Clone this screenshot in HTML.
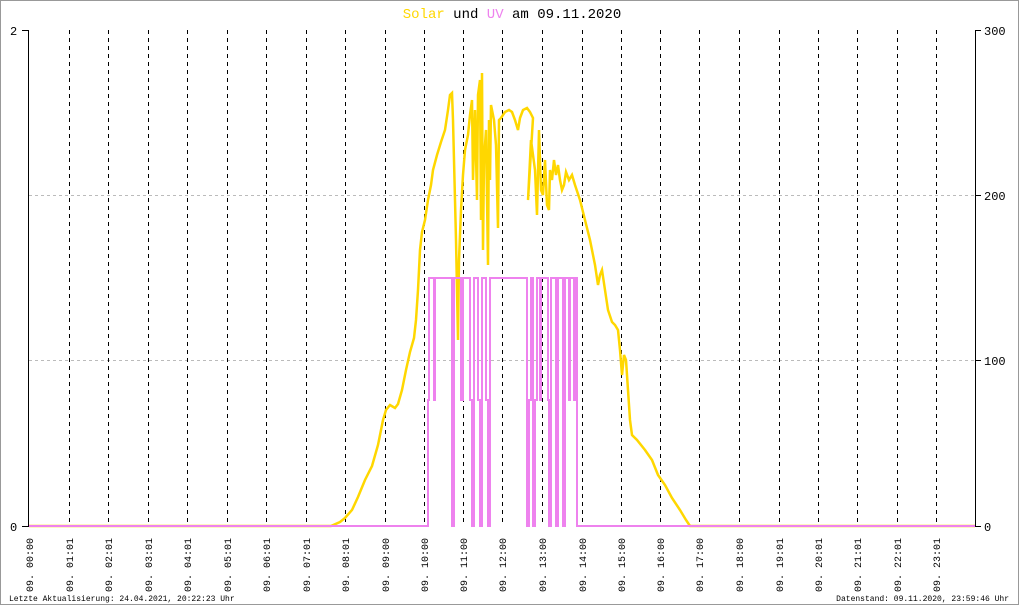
<!DOCTYPE html>
<html><head><meta charset="utf-8"><style>
html,body{margin:0;padding:0;background:#fff;}
svg{display:block;}
text{font-family:"Liberation Mono","DejaVu Sans Mono",monospace;}
</style></head><body>
<svg width="1020" height="606" viewBox="0 0 1020 606" xmlns="http://www.w3.org/2000/svg">
<rect x="0.5" y="0.5" width="1018" height="604" fill="#fff" stroke="#999" stroke-width="1"/>
<text x="512" y="18" font-size="14" text-anchor="middle"><tspan fill="#ffd700">Solar</tspan><tspan fill="#000"> und </tspan><tspan fill="#ee82ee">UV</tspan><tspan fill="#000"> am 09.11.2020</tspan></text>
<g stroke="#bbb" stroke-dasharray="3,3" stroke-width="1">
<line x1="29" y1="195.5" x2="975" y2="195.5"/>
<line x1="29" y1="360.5" x2="975" y2="360.5"/>
</g>
<g stroke="#000" stroke-dasharray="4,4" stroke-width="1">
<line x1="69.5" y1="30" x2="69.5" y2="526"/><line x1="108.5" y1="30" x2="108.5" y2="526"/><line x1="148.5" y1="30" x2="148.5" y2="526"/><line x1="187.5" y1="30" x2="187.5" y2="526"/><line x1="227.5" y1="30" x2="227.5" y2="526"/><line x1="266.5" y1="30" x2="266.5" y2="526"/><line x1="306.5" y1="30" x2="306.5" y2="526"/><line x1="345.5" y1="30" x2="345.5" y2="526"/><line x1="385.5" y1="30" x2="385.5" y2="526"/><line x1="424.5" y1="30" x2="424.5" y2="526"/><line x1="463.5" y1="30" x2="463.5" y2="526"/><line x1="502.5" y1="30" x2="502.5" y2="526"/><line x1="542.5" y1="30" x2="542.5" y2="526"/><line x1="582.5" y1="30" x2="582.5" y2="526"/><line x1="621.5" y1="30" x2="621.5" y2="526"/><line x1="660.5" y1="30" x2="660.5" y2="526"/><line x1="699.5" y1="30" x2="699.5" y2="526"/><line x1="739.5" y1="30" x2="739.5" y2="526"/><line x1="779.5" y1="30" x2="779.5" y2="526"/><line x1="818.5" y1="30" x2="818.5" y2="526"/><line x1="857.5" y1="30" x2="857.5" y2="526"/><line x1="897.5" y1="30" x2="897.5" y2="526"/><line x1="936.5" y1="30" x2="936.5" y2="526"/>
</g>
<g stroke="#000" stroke-width="1" fill="none">
<line x1="28.5" y1="30" x2="28.5" y2="527"/>
<line x1="975.5" y1="30" x2="975.5" y2="527"/>
<line x1="22" y1="30.5" x2="29" y2="30.5"/>
<line x1="22" y1="526.5" x2="29" y2="526.5"/>
<line x1="975" y1="30.5" x2="981" y2="30.5"/>
<line x1="975" y1="195.5" x2="981" y2="195.5"/>
<line x1="975" y1="360.5" x2="981" y2="360.5"/>
<line x1="975" y1="526.5" x2="981" y2="526.5"/>
</g>
<polyline fill="none" stroke="#ffd700" stroke-width="2.5" points="29,526 331,526 340,522 345,518 352,510 358,497 365,480 372,466 378,445 383,420 386,410 390,405 395,408 398,404 402,390 406,370 410,352 414,338 416,320 418,290 420,250 422,232 425,220 428,200 431,185 433,170 437,155 441,142 445,130 448,110 450,95 452,93 453,120 455,200 456,240 457,290 458,340 459,260 461,210 463,175 465,150 468,135 470,115 472,100 473,180 475,110 477,200 478,95 480,80 481,220 482,73 483,250 484,160 486,130 488,265 489,120 490,180 491,105 494,120 496,145 498,228 499,120 501,118 505,112 509,110 512,112 515,120 518,130 520,118 523,110 527,108 530,112 533,118 528,200 531,140 535,170 537,215 539,130 541,190 543,195 545,160 547,205 549,210 550,170 552,180 554,160 556,175 558,165 560,180 562,190 564,185 566,172 569,180 572,175 575,185 580,200 585,220 590,240 595,265 598,285 600,275 602,270 605,290 608,310 612,322 615,325 618,330 620,350 622,375 624,355 626,360 628,390 630,420 632,435 637,440 645,450 652,460 658,475 665,485 672,498 680,510 686,520 690,526 975,526"/>
<polyline fill="none" stroke="#ee82ee" stroke-width="2" points="29,526 428,526 428,400 429,400 429,278 434,278 434,400 435,400 435,278 452,278 452,526 454,526 454,278 461,278 461,400 463,400 463,278 470,278 470,400 472,400 472,526 474,526 474,278 478,278 478,400 480,400 480,526 482,526 482,278 486,278 486,400 488,400 488,526 490,526 490,278 527,278 527,526 529,526 529,400 531,400 531,278 533,278 533,526 535,526 535,400 537,400 537,278 540,278 540,400 541,400 541,278 548,278 548,400 549,400 549,526 551,526 551,278 556,278 556,526 558,526 558,278 563,278 563,526 565,526 565,278 569,278 569,400 570,400 570,278 574,278 574,400 575,400 575,278 577,278 577,526 975,526"/>
<g font-size="12" fill="#000">
<text x="10" y="35">2</text><text x="10" y="531">0</text>
<text x="984" y="35">300</text><text x="984" y="200">200</text><text x="984" y="365">100</text><text x="984" y="531">0</text>
</g>
<g font-size="10" fill="#000">
<text transform="translate(33,592) rotate(-90)">09. 00:00</text>
<text transform="translate(73,592) rotate(-90)">09. 01:01</text>
<text transform="translate(112,592) rotate(-90)">09. 02:01</text>
<text transform="translate(152,592) rotate(-90)">09. 03:01</text>
<text transform="translate(191,592) rotate(-90)">09. 04:01</text>
<text transform="translate(231,592) rotate(-90)">09. 05:01</text>
<text transform="translate(270,592) rotate(-90)">09. 06:01</text>
<text transform="translate(310,592) rotate(-90)">09. 07:01</text>
<text transform="translate(349,592) rotate(-90)">09. 08:01</text>
<text transform="translate(389,592) rotate(-90)">09. 09:00</text>
<text transform="translate(428,592) rotate(-90)">09. 10:00</text>
<text transform="translate(467,592) rotate(-90)">09. 11:00</text>
<text transform="translate(506,592) rotate(-90)">09. 12:00</text>
<text transform="translate(546,592) rotate(-90)">09. 13:00</text>
<text transform="translate(586,592) rotate(-90)">09. 14:00</text>
<text transform="translate(625,592) rotate(-90)">09. 15:00</text>
<text transform="translate(664,592) rotate(-90)">09. 16:00</text>
<text transform="translate(703,592) rotate(-90)">09. 17:00</text>
<text transform="translate(743,592) rotate(-90)">09. 18:00</text>
<text transform="translate(783,592) rotate(-90)">09. 19:01</text>
<text transform="translate(822,592) rotate(-90)">09. 20:01</text>
<text transform="translate(861,592) rotate(-90)">09. 21:01</text>
<text transform="translate(901,592) rotate(-90)">09. 22:01</text>
<text transform="translate(940,592) rotate(-90)">09. 23:01</text>
</g>
<g font-size="8" fill="#000">
<text x="9" y="601">Letzte Aktualisierung: 24.04.2021, 20:22:23 Uhr</text>
<text x="1009" y="601" text-anchor="end">Datenstand: 09.11.2020, 23:59:46 Uhr</text>
</g>
</svg>
</body></html>
